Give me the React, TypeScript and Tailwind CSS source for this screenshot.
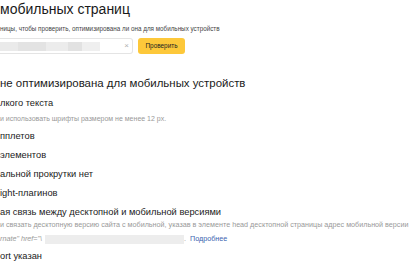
import React from "react";

const font = { fontFamily: '"Liberation Sans", Arial, sans-serif' };

export default function App() {
  return (
    <div className="w-[410px] h-[273px] overflow-hidden bg-white text-[#1a1a1a]" style={font}>
      <div className="text-[14px] leading-[18px] whitespace-nowrap">мобильных страниц</div>
      <div className="mt-[6px] text-[6.3px] leading-[10px] text-[#444] whitespace-nowrap">
        ницы, чтобы проверить, оптимизирована ли она для мобильных устройств
      </div>
      <div className="mt-[4px] flex items-center">
        <div className="w-[133px] h-[16px] border border-[#e4e4e4] border-l-0 rounded-r-[3px] flex items-center">
          <div className="flex items-center h-[9px]">
            <div className="w-[18px] h-[9px] bg-[#eaeaea]" />
            <div className="w-[28px] h-[9px] bg-[#e3e3e3]" />
            <div className="w-[22px] h-[9px] bg-[#ececec]" />
            <div className="w-[14px] h-[9px] bg-[#e2e2e2]" />
            <div className="w-[18px] h-[9px] bg-[#efefef]" />
          </div>
          <div className="ml-auto mr-[3px] text-[8px] leading-none text-[#b0b0b0]">×</div>
        </div>
        <div className="ml-[5px] w-[47px] h-[16px] rounded-[3px] bg-[#fdc83a] flex items-center justify-center text-[6.4px] text-[#222]">
          Проверить
        </div>
      </div>
      <div className="mt-[21px] text-[11.45px] leading-[16px] whitespace-nowrap">
        не оптимизирована для мобильных устройств
      </div>
      <div className="mt-[3px] text-[9.3px] leading-[19px] whitespace-nowrap">лкого текста</div>
      <div className="-mt-[1px] text-[7px] leading-[14px] text-[#999] whitespace-nowrap">
        и использовать шрифты размером не менее 12 px.
      </div>
      <div className="mt-[1px] text-[9.3px] leading-[19px] whitespace-nowrap">пплетов</div>
      <div className="text-[9.3px] leading-[19px] whitespace-nowrap">элементов</div>
      <div className="text-[9.3px] leading-[19px] whitespace-nowrap">альной прокрутки нет</div>
      <div className="text-[9.3px] leading-[19px] whitespace-nowrap">ight-плагинов</div>
      <div className="text-[9.3px] leading-[19px] whitespace-nowrap">ая связь между десктопной и мобильной версиями</div>
      <div className="-mt-[4px] text-[7.2px] leading-[14px] text-[#999] whitespace-nowrap">
        и связать десктопную версию сайта с мобильной, указав в элементе head десктопной страницы адрес мобильной версии
      </div>
      <div className="flex items-center h-[14px] text-[7.2px] leading-[14px] whitespace-nowrap">
        <span className="italic text-[#999]">rnate" href="\</span>
        <span className="ml-[3px] w-[139px] h-[9px] bg-[#ededed]" />
        <span className="text-[#999]">.</span>
        <span className="ml-[4px] text-[#3a64b0]">Подробнее</span>
      </div>
      <div className="mt-[1px] text-[9.3px] leading-[19px] whitespace-nowrap">ort указан</div>
    </div>
  );
}
